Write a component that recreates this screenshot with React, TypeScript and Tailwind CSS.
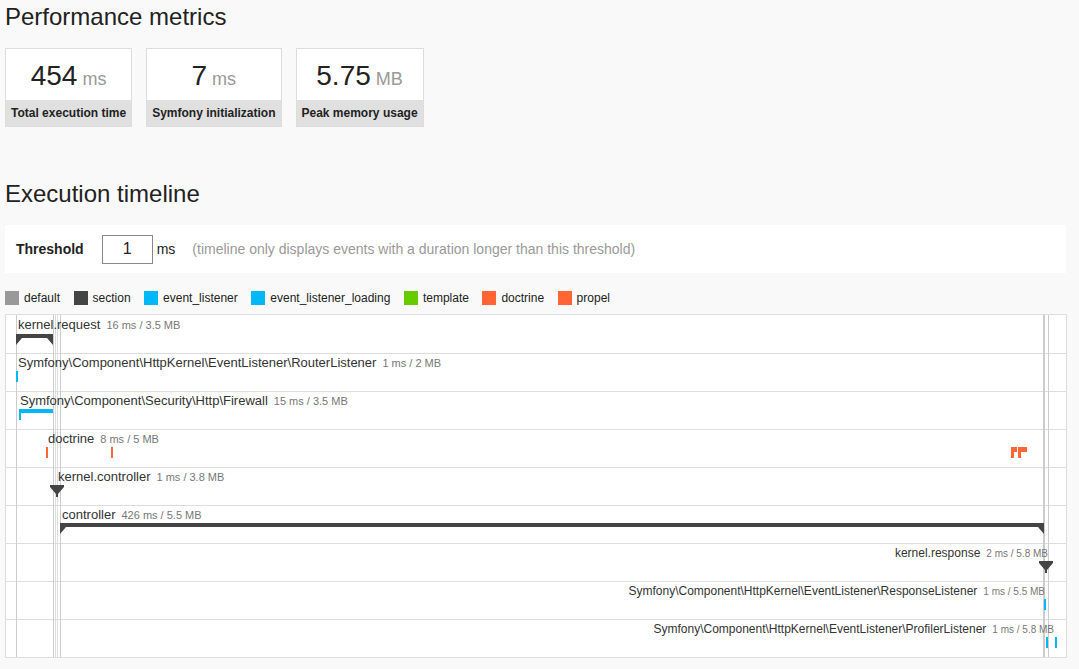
import React from "react";

const colors: Record<string, string> = {
  default: "#999999",
  section: "#444444",
  event_listener: "#00b8f5",
  event_listener_loading: "#00b8f5",
  template: "#66cc00",
  doctrine: "#ff6633",
  propel: "#ff6633",
};

const metrics = [
  { value: "454", unit: "ms", label: "Total execution time" },
  { value: "7", unit: "ms", label: "Symfony initialization" },
  { value: "5.75", unit: "MB", label: "Peak memory usage" },
];

type Row = {
  name: string;
  detail: string;
  x: number;
  anchor?: "start" | "end";
};

// label positions are in canvas coords (page x - 6)
const rows: Row[] = [
  { name: "kernel.request", detail: "16 ms / 3.5 MB", x: 12 },
  { name: "Symfony\\Component\\HttpKernel\\EventListener\\RouterListener", detail: "1 ms / 2 MB", x: 12 },
  { name: "Symfony\\Component\\Security\\Http\\Firewall", detail: "15 ms / 3.5 MB", x: 14 },
  { name: "doctrine", detail: "8 ms / 5 MB", x: 42 },
  { name: "kernel.controller", detail: "1 ms / 3.8 MB", x: 52 },
  { name: "controller", detail: "426 ms / 5.5 MB", x: 56 },
  { name: "kernel.response", detail: "2 ms / 5.8 MB", x: 1042, anchor: "end" },
  { name: "Symfony\\Component\\HttpKernel\\EventListener\\ResponseListener", detail: "1 ms / 5.5 MB", x: 1039, anchor: "end" },
  { name: "Symfony\\Component\\HttpKernel\\EventListener\\ProfilerListener", detail: "1 ms / 5.8 MB", x: 1048, anchor: "end" },
];

const W = 1060;
const H = 342;
const ROW = 38;

function Section({ x1, x2, t }: { x1: number; x2: number; t: number }) {
  const d = `M${x1} ${t}H${x2}V${t + 11}L${x2 - 6} ${t + 4}H${x1 + 6}L${x1} ${t + 11}Z`;
  return <path d={d} fill={colors.section} />;
}

function Marker({ x, t }: { x: number; t: number }) {
  const d = `M${x - 7} ${t}H${x + 7}V${t + 2}L${x + 1} ${t + 9}V${t + 12}H${x - 1}V${t + 9}L${x - 7} ${t + 2}Z`;
  return <path d={d} fill={colors.section} />;
}

function Period({ x, w, t, color, bar = 4, stem = 2 }: { x: number; w: number; t: number; color: string; bar?: number; stem?: number }) {
  return (
    <g fill={color}>
      <rect x={x} y={t} width={w} height={bar} />
      <rect x={x} y={t} width={stem} height={11} />
    </g>
  );
}

function Timeline() {
  return (
    <svg width={W} height={H} className="block">
      {[1, 2, 3, 4, 5, 6, 7, 8].map((i) => (
        <rect key={i} x={0} y={i * ROW} width={W} height={1} fill="#dddddd" />
      ))}
      {[10, 47, 54, 1042].map((x) => (
        <rect key={x} x={x} y={0} width={1} height={H} fill="#cccccc" />
      ))}
      {[49, 51].map((x) => (
        <rect key={x} x={x} y={0} width={1} height={H} fill="#dddddd" />
      ))}
      <rect x={1037} y={0} width={2} height={H} fill="#cccccc" />

      {rows.map((r, i) => {
        const right = r.anchor === "end";
        return (
          <text
            key={i}
            x={r.x}
            y={i * ROW + 14}
            textAnchor={r.anchor ?? "start"}
            fontSize={right ? 12 : 13}
            fill="#333333"
            fontFamily="'Liberation Sans', Arial, sans-serif"
          >
            <tspan>{r.name}</tspan>
            <tspan dx={6} fontSize={right ? 10 : 11} fill="#777777">
              {r.detail}
            </tspan>
          </text>
        );
      })}

      <Section x1={10} x2={47} t={19} />
      <Period x={10} w={2} t={56} color={colors.event_listener} />
      <Period x={13} w={34} t={94} color={colors.event_listener} />
      <Period x={40} w={2} t={132} color={colors.doctrine} />
      <Period x={105} w={2} t={132} color={colors.doctrine} />
      <Period x={1005} w={6} t={132} color={colors.doctrine} bar={5} stem={3} />
      <Period x={1012} w={9} t={132} color={colors.doctrine} bar={5} stem={3} />
      <Marker x={51} t={170} />
      <Section x1={54} x2={1038} t={208} />
      <Marker x={1040} t={246} />
      <Period x={1038} w={2} t={284} color={colors.event_listener} />
      <Period x={1040} w={2} t={322} color={colors.event_listener} />
      <Period x={1049} w={2} t={322} color={colors.event_listener} />
    </svg>
  );
}

export default function App() {
  return (
    <div className="min-h-screen bg-[#f9f9f9] px-[5px] pt-[3px] pb-4 font-['Liberation_Sans',Arial,sans-serif] text-[#222]">
      <h2 className="text-[24px] leading-[28px] font-normal">Performance metrics</h2>

      <div className="mt-[17px] flex gap-[14px]">
        {metrics.map((m) => (
          <div key={m.label} className="border border-[#dddddd] bg-white">
            <div className="h-[51px] pt-[11px] text-center leading-[32px]">
              <span className="text-[28px]">{m.value}</span>
              <span className="ml-[5px] text-[18px] text-[#999]">{m.unit}</span>
            </div>
            <div className="flex h-[26px] items-center justify-center bg-[#e0e0e0] px-[5px] text-[12px] font-bold">
              {m.label}
            </div>
          </div>
        ))}
      </div>

      <h2 className="mt-[53px] text-[24px] leading-[28px] font-normal">Execution timeline</h2>

      <div className="mt-[17px] flex h-[48px] w-[1061px] items-center bg-white pl-[11px] text-[14px]">
        <span className="font-bold">Threshold</span>
        <div className="ml-[18px] flex h-[29px] w-[51px] items-center justify-center border border-[#888] text-[16px]">
          1
        </div>
        <span className="ml-[4px]">ms</span>
        <span className="ml-[17px] text-[#999]">
          (timeline only displays events with a duration longer than this threshold)
        </span>
      </div>

      <div className="mt-[18px] flex h-[14px] items-center gap-[13.5px] text-[12px]">
        {Object.entries(colors).map(([name, c]) => (
          <div key={name} className="flex items-center gap-[5px]">
            <span className="block h-[14px] w-[14px]" style={{ backgroundColor: c }} />
            <span>{name}</span>
          </div>
        ))}
      </div>

      <div className="mt-[9px] w-[1062px] border border-[#dddddd] bg-white">
        <Timeline />
      </div>
    </div>
  );
}
